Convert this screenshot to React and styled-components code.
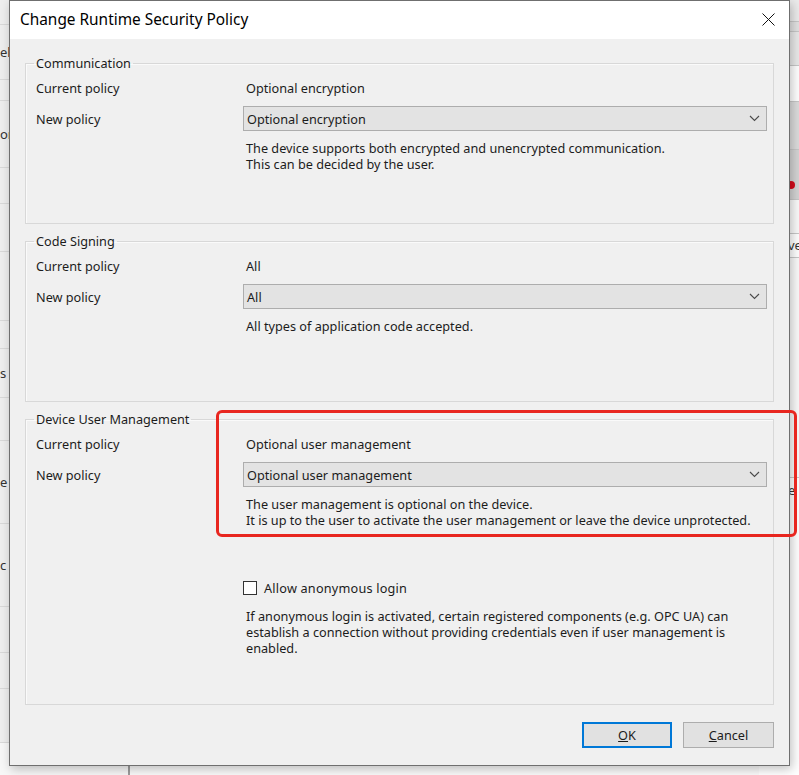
import React from 'react'
import styled, { createGlobalStyle } from 'styled-components'

const GlobalStyle = createGlobalStyle`
  html, body {
    margin: 0;
    padding: 0;
    background: #ffffff;
  }
  body {
    font-family: "Noto Sans", "Liberation Sans", sans-serif;
  }
`

// rows of the list window behind the dialog; only their first letters peek out
const sideRows = [
  { h: 24 },
  { h: 54, t: 'el' },
  { h: 20 },
  { h: 66, t: 'or' },
  { h: 35 },
  { h: 47 },
  { h: 68 },
  { h: 27 },
  { h: 48, t: 's' },
  { h: 42 },
  { h: 82, t: 'e' },
  { h: 82, t: 'c' },
  { h: 45 },
  { h: 35 },
  { h: 53 },
]

const groups = [
  {
    title: 'Communication',
    current: 'Optional encryption',
    selected: 'Optional encryption',
    text: ['The device supports both encrypted and unencrypted communication.', 'This can be decided by the user.'],
    height: 161,
  },
  {
    title: 'Code Signing',
    current: 'All',
    selected: 'All',
    text: ['All types of application code accepted.'],
    height: 161,
  },
  {
    title: 'Device User Management',
    current: 'Optional user management',
    selected: 'Optional user management',
    text: ['The user management is optional on the device.', 'It is up to the user to activate the user management or leave the device unprotected.'],
    height: 286,
    anonymous: true,
  },
]

function Chevron() {
  return (
    <svg width="11" height="7" viewBox="0 0 11 7">
      <path d="M1 1 L5.5 5.5 L10 1" fill="none" stroke="#4a4a4a" strokeWidth="1.1" />
    </svg>
  )
}

function CloseIcon() {
  return (
    <svg width="13" height="13" viewBox="0 0 13 13">
      <path d="M0.5 0.5 L12.5 12.5 M12.5 0.5 L0.5 12.5" stroke="#111" strokeWidth="1" />
    </svg>
  )
}

function PolicyGroup({ group }) {
  return (
    <Group $h={group.height}>
      <Legend>{group.title}</Legend>
      <Row>
        <Label>Current policy</Label>
        <Value>{group.current}</Value>
      </Row>
      <Row $gap={8}>
        <Label>New policy</Label>
        <Combo>
          <span>{group.selected}</span>
          <Chevron />
        </Combo>
      </Row>
      <Note $gap={9}>
        {group.text.map((line, i) => (
          <div key={i}>{line}</div>
        ))}
      </Note>
      {group.anonymous && (
        <>
          <CheckRow>
            <CheckBox />
            <span>Allow anonymous login</span>
          </CheckRow>
          <Note $gap={11}>
            <div>If anonymous login is activated, certain registered components (e.g. OPC UA) can</div>
            <div>establish a connection without providing credentials even if user management is</div>
            <div>enabled.</div>
          </Note>
        </>
      )}
    </Group>
  )
}

export default function App() {
  return (
    <>
      <GlobalStyle />
      <Desktop>
        <Backdrop>
          <SideList>
            {sideRows.map((r, i) => (
              <SideItem key={i} style={{ height: r.h }}>
                {r.t && <Tail>{r.t}</Tail>}
              </SideItem>
            ))}
          </SideList>
          <MainArea />
          <RightPanel>
            <RightBand $h={22} $bg="#ececec" />
            <RightBand $h={10} $bg="#e2e2e2" />
            <RightBand $h={34} $bg="#e9e9e9" />
            <RightBand $h={36} $bg="#ffffff" />
            <RightBand $h={48} $bg="#dcdcdc" />
            <RightBand $h={50} $bg="#d4d4d4">
              <Dot />
            </RightBand>
            <RightBand $h={34} $bg="#fafafa" />
            <RightBand $h={24} $bg="#ffffff">
              <RightText>ve</RightText>
            </RightBand>
            <RightBand $h={220} $bg="#fafafa">
              <RightText $pad={223}>e</RightText>
            </RightBand>
          </RightPanel>
        </Backdrop>

        <Dialog>
          <TitleBar>
            <Title>Change Runtime Security Policy</Title>
            <CloseButton>
              <CloseIcon />
            </CloseButton>
          </TitleBar>
          <Body>
            {groups.map((g) => (
              <PolicyGroup key={g.title} group={g} />
            ))}
            <ButtonBar>
              <Button $primary>
                <u>O</u>K
              </Button>
              <Button>
                <u>C</u>ancel
              </Button>
            </ButtonBar>
          </Body>
        </Dialog>

        <Highlight />
      </Desktop>
    </>
  )
}

const Desktop = styled.div`
  position: relative;
  width: 799px;
  height: 775px;
  overflow: hidden;
  background: #ffffff;
`

const Backdrop = styled.div`
  display: flex;
  height: 100%;
`

const SideList = styled.div`
  width: 128px;
  border-right: 2px solid #9c9c9c;
  background: #f7f7f7;
  display: flex;
  flex-direction: column;
`

const SideItem = styled.div`
  flex: none;
  border-bottom: 1px solid #d9d9d9;
  background: #eeeeee;
  display: flex;
  align-items: center;
`

const Tail = styled.div`
  white-space: nowrap;
  font-size: 13px;
  color: #333;
`

const MainArea = styled.div`
  flex: 1;
  background: #fafafa;
`

const RightPanel = styled.div`
  width: 40px;
  display: flex;
  flex-direction: column;
`

const RightBand = styled.div`
  height: ${(p) => p.$h}px;
  background: ${(p) => p.$bg};
  border-bottom: 1px solid #c8c8c8;
  display: flex;
  align-items: flex-end;
  justify-content: flex-end;
  padding-bottom: 8px;
  box-sizing: border-box;
`

const Dot = styled.div`
  width: 8px;
  height: 8px;
  border-radius: 50%;
  background: #d60a1a;
  margin-right: 4px;
  margin-bottom: 2px;
`

const RightText = styled.div`
  width: 11px;
  font-size: 13px;
  color: #333;
  align-self: flex-start;
  margin-top: ${(p) => p.$pad || 2}px;
  white-space: nowrap;
`

const Dialog = styled.div`
  position: absolute;
  left: 9px;
  top: 0;
  width: 781px;
  height: 766px;
  box-sizing: border-box;
  border: 1px solid #6f6f6f;
  background: #f0f0f0;
  box-shadow: 2px 3px 10px rgba(0, 0, 0, 0.25);
  display: flex;
  flex-direction: column;
  color: #1c1c1c;
`

const TitleBar = styled.div`
  height: 38px;
  background: #ffffff;
  display: flex;
  align-items: center;
  justify-content: space-between;
  padding: 0 14px 0 10px;
  flex: none;
`

const Title = styled.div`
  font-size: 15.4px;
  color: #000;
  margin-top: -1px;
`

const CloseButton = styled.div`
  display: flex;
  align-items: center;
  margin-top: -1px;
`

const Body = styled.div`
  flex: 1;
  padding: 16px 15px 0 15px;
  display: flex;
  flex-direction: column;
  gap: 9px;
  font-size: 12.7px;
`

const Group = styled.fieldset`
  margin: 0;
  min-width: 0;
  height: ${(p) => p.$h + 8}px;
  box-sizing: border-box;
  border: 1px solid #d8d8d8;
  box-shadow: inset 1px 1px 0 #fafafa;
  padding: 7px 6px 0 10px;
`

const Legend = styled.legend`
  font-size: 12.7px;
  line-height: 16px;
  padding: 0 2px;
  margin-left: -2px;
  color: #1c1c1c;
`

const Row = styled.div`
  display: grid;
  grid-template-columns: 207px 1fr;
  align-items: center;
  margin-top: ${(p) => p.$gap || 0}px;
  min-height: 20px;
`

const Label = styled.div`
  line-height: 20px;
`

const Value = styled.div`
  padding-left: 3px;
  line-height: 20px;
`

const Combo = styled.div`
  height: 25px;
  box-sizing: border-box;
  border: 1px solid #adadad;
  background: #e3e3e3;
  display: flex;
  align-items: center;
  justify-content: space-between;
  padding: 0 6px 0 3px;
`

const Note = styled.div`
  margin-top: ${(p) => p.$gap}px;
  margin-left: 210px;
  line-height: 16px;
`

const CheckRow = styled.label`
  display: flex;
  align-items: center;
  gap: 7px;
  margin-top: 51px;
  margin-left: 207px;
  height: 18px;
  letter-spacing: 0.2px;
`

const CheckBox = styled.span`
  width: 14px;
  height: 14px;
  box-sizing: border-box;
  border: 1px solid #333;
  background: #fff;
`

const ButtonBar = styled.div`
  display: flex;
  justify-content: flex-end;
  gap: 11px;
  margin-top: 8px;
`

const Button = styled.button`
  width: ${(p) => (p.$primary ? 90 : 91)}px;
  height: 26px;
  box-sizing: border-box;
  background: #e1e1e1;
  border: ${(p) => (p.$primary ? '2px solid #0078d7' : '1px solid #adadad')};
  font-family: inherit;
  font-size: 12.7px;
  color: #1c1c1c;
  padding: 0;
  text-align: center;
`

const Highlight = styled.div`
  position: absolute;
  left: 216px;
  top: 410px;
  width: 581px;
  height: 127px;
  box-sizing: border-box;
  border: 3px solid #e8261f;
  border-radius: 6px;
  pointer-events: none;
`
